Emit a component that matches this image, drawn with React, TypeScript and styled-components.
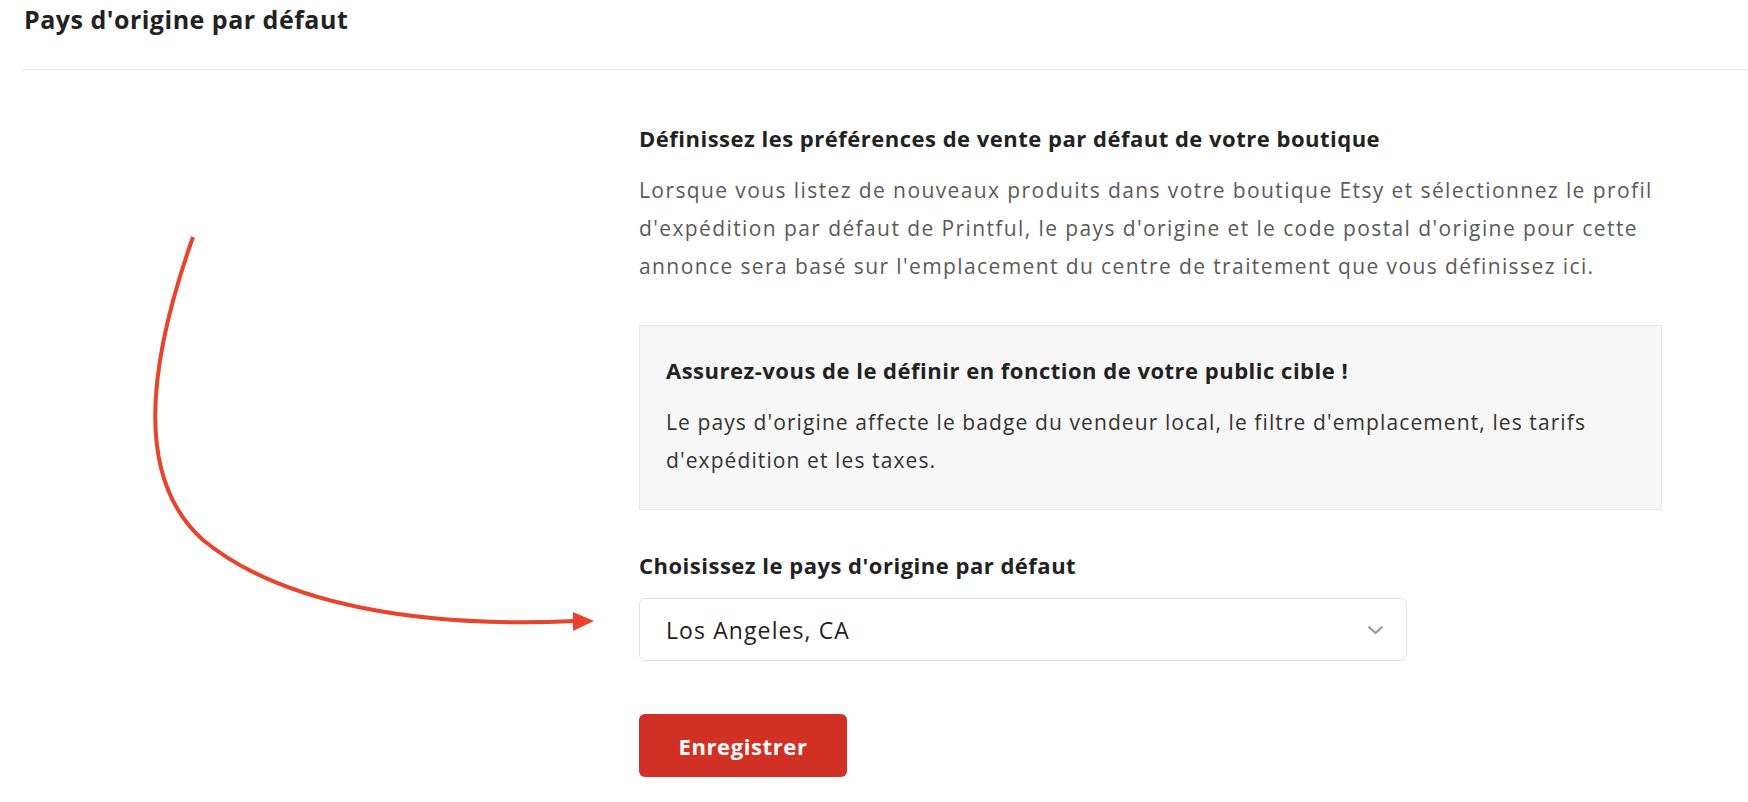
import React from 'react';
import styled, {createGlobalStyle} from 'styled-components';

const GlobalStyle = createGlobalStyle`
  html, body {
    margin: 0;
    padding: 0;
    background: #fff;
  }
  body {
    font-family: "Open Sans", Lato, Arial, sans-serif;
    color: #222;
  }
`;

const Page = styled.main`
  position: relative;
  width: 1748px;
  height: 802px;
  padding: 7px 0 0 22px;
  box-sizing: border-box;
  overflow: hidden;
`;

const Title = styled.h1`
  margin: 0 0 0 2px;
  font-size: 25px;
  line-height: 25px;
  font-weight: 700;
  letter-spacing: 0.5px;
  color: #222;
`;

const Divider = styled.hr`
  margin: 37px 0 0 0;
  border: 0;
  height: 1px;
  background: #e6e6e6;
`;

const Body = styled.div`
  display: grid;
  grid-template-columns: 617px 1fr;
  padding-top: 53px;
`;

const Column = styled.section`
  grid-column: 2;
  display: flex;
  flex-direction: column;
  align-items: flex-start;
`;

const Heading = styled.h2<{gap?: number}>`
  margin: 0 0 ${p => p.gap ?? 18}px 0;
  font-size: 22px;
  line-height: 30px;
  font-weight: 700;
  letter-spacing: 0.5px;
  color: #222;
  white-space: nowrap;
`;

const Text = styled.p<{tone?: string; spacing?: number}>`
  margin: 0;
  font-size: 21px;
  line-height: 38px;
  letter-spacing: ${p => p.spacing ?? 1.1}px;
  color: ${p => p.tone ?? '#5a5a5a'};
  white-space: nowrap;
`;

const Callout = styled.div`
  width: 1023px;
  box-sizing: border-box;
  margin-top: 40px;
  padding: 29px 26px 30px;
  background: #f7f7f7;
  border: 1px solid #e6e6e6;
`;

const Field = styled.div`
  margin-top: 40px;
  display: flex;
  flex-direction: column;
`;

const Select = styled.div`
  width: 768px;
  height: 63px;
  box-sizing: border-box;
  padding: 0 22px 0 26px;
  display: flex;
  align-items: center;
  justify-content: space-between;
  border: 1px solid #e3e3e3;
  border-radius: 6px;
  background: #fff;
  font-size: 23px;
  letter-spacing: 1.1px;
  color: #222;
`;

const Button = styled.button`
  margin-top: 53px;
  width: 208px;
  height: 63px;
  border: 0;
  border-radius: 6px;
  background: #d13124;
  color: #fff;
  font-family: inherit;
  font-size: 22px;
  font-weight: 700;
  letter-spacing: 0.6px;
  cursor: pointer;
`;

const Annotation = styled.svg`
  position: absolute;
  left: 0;
  top: 0;
  pointer-events: none;
`;

function Chevron() {
  return (
    <svg width="17" height="10" viewBox="0 0 17 10" fill="none">
      <path d="M1.5 1.5 L8.5 8 L15.5 1.5" stroke="#9b9b9b" strokeWidth="2.2" />
    </svg>
  );
}

export default function App() {
  return (
    <Page>
      <GlobalStyle />
      <Title>Pays d'origine par défaut</Title>
      <Divider />
      <Body>
        <Column>
          <Heading>Définissez les préférences de vente par défaut de votre boutique</Heading>
          <Text spacing={1.4}>
            Lorsque vous listez de nouveaux produits dans votre boutique Etsy et sélectionnez le profil
            <br />
            d'expédition par défaut de Printful, le pays d'origine et le code postal d'origine pour cette
            <br />
            annonce sera basé sur l'emplacement du centre de traitement que vous définissez ici.
          </Text>
          <Callout>
            <Heading>Assurez-vous de le définir en fonction de votre public cible !</Heading>
            <Text tone="#333">
              Le pays d'origine affecte le badge du vendeur local, le filtre d'emplacement, les tarifs
              <br />
              d'expédition et les taxes.
            </Text>
          </Callout>
          <Field>
            <Heading gap={18}>Choisissez le pays d'origine par défaut</Heading>
            <Select>
              <span>Los Angeles, CA</span>
              <Chevron />
            </Select>
          </Field>
          <Button>Enregistrer</Button>
        </Column>
      </Body>
      <Annotation width="1748" height="802" viewBox="0 0 1748 802">
        <path
          d="M193 237 C 146 370, 136 480, 203 540 C 282 605, 420 628, 575 621"
          fill="none"
          stroke="#e8432b"
          strokeWidth="4"
        />
        <path d="M573 612 L594 621 L573 631 Z" fill="#e8432b" />
      </Annotation>
    </Page>
  );
}
